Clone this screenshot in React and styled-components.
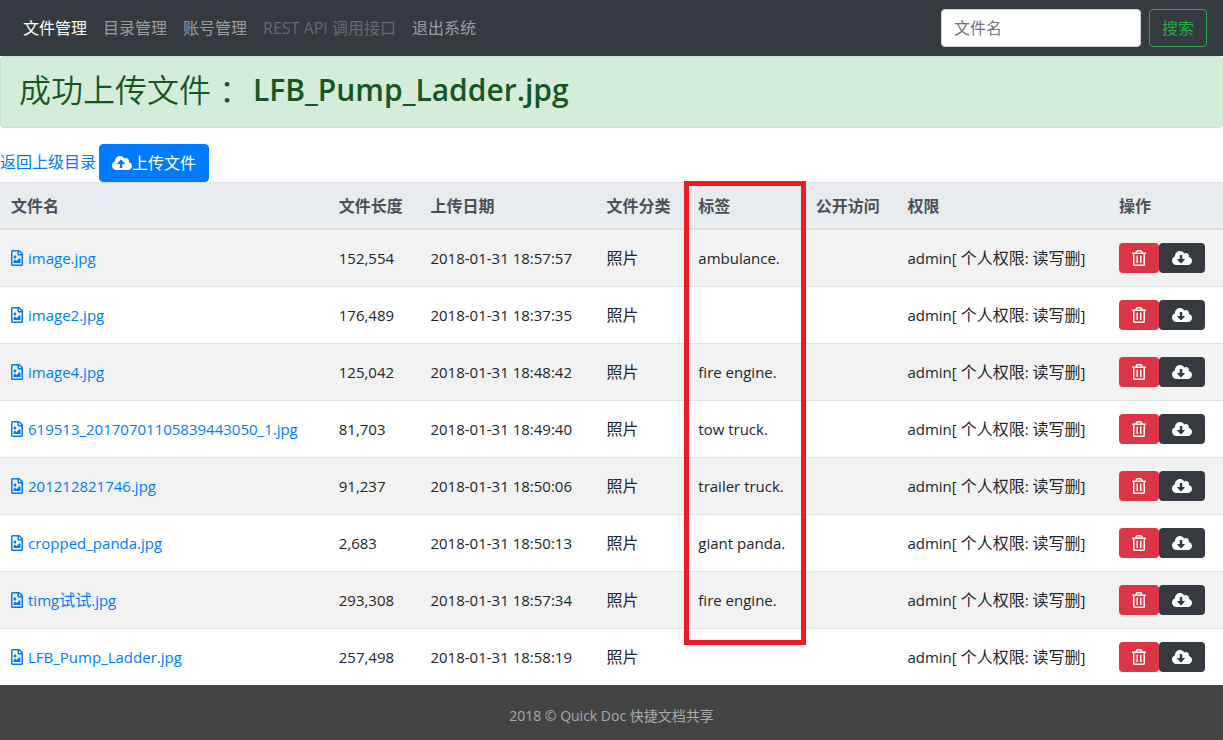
import React from "react";
import styled, { createGlobalStyle } from "styled-components";
import {
  FaCloudDownloadAlt,
  FaCloudUploadAlt,
  FaRegFileImage,
  FaRegTrashAlt,
} from "react-icons/fa";

const GlobalStyle = createGlobalStyle`
  *, *::before, *::after { box-sizing: border-box; }
  body {
    margin: 0;
    background: #fff;
    color: #212529;
    font-family: "Open Sans", "Noto Sans CJK SC", sans-serif;
    font-size: 16px;
    line-height: 24px;
  }
  button, input { font: inherit; }
  a { color: #007bff; text-decoration: none; }
`;

const Latin = styled.span`
  font-size: 15px;
`;

const Navbar = styled.nav`
  display: flex;
  align-items: center;
  justify-content: space-between;
  padding: 9px 16px 9px 15px;
  background: #343a40;
`;

const NavList = styled.ul`
  display: flex;
  margin: 0;
  padding: 0;
  list-style: none;
`;

const navColors = {
  active: "#fff",
  disabled: "rgba(255, 255, 255, 0.25)",
  normal: "rgba(255, 255, 255, 0.5)",
};

const NavLink = styled.a`
  display: block;
  padding: 7px 8px;
  white-space: nowrap;
  color: ${({ $state }) => navColors[$state || "normal"]};
`;

const SearchForm = styled.form`
  display: flex;
  gap: 8px;
`;

const SearchInput = styled.input`
  width: 200px;
  height: 38px;
  padding: 6px 12px;
  border: 1px solid #ced4da;
  border-radius: 4px;
  background: #fff;
  color: #495057;
  &::placeholder { color: #6c757d; opacity: 1; }
`;

const SearchButton = styled.button`
  height: 38px;
  padding: 0 12px;
  border: 1px solid #28a745;
  border-radius: 4px;
  background: transparent;
  color: #28a745;
  cursor: pointer;
`;

const Alert = styled.div`
  margin-bottom: 16px;
  padding: 12px 18px;
  border: 1px solid #c3e6cb;
  border-radius: 4px;
  background: #d4edda;
  color: #155724;
`;

const AlertTitle = styled.h2`
  display: flex;
  align-items: center;
  height: 46px;
  margin: 0;
  padding-bottom: 4px;
  font-size: 32px;
  font-weight: 350;
  line-height: 40px;

  strong {
    margin-left: 10px;
    font-size: 30px;
    font-weight: 600;
  }
`;

const Colon = styled.span`
  font-family: "Noto Sans CJK TC", sans-serif;
`;

const Toolbar = styled.div`
  display: flex;
  align-items: center;
  gap: 3px;
`;

const BackLink = styled.a`
  padding-bottom: 2px;
`;

const UploadButton = styled.button`
  display: flex;
  align-items: center;
  height: 38px;
  padding: 0 12px;
  border: 1px solid #007bff;
  border-radius: 4px;
  background: #007bff;
  color: #fff;
  cursor: pointer;
`;

const CloudUp = styled(FaCloudUploadAlt)`
  width: 20px;
  height: 16px;
`;

const TableArea = styled.div`
  position: relative;
`;

const TagHighlight = styled.div`
  position: absolute;
  top: -1px;
  bottom: 40px;
  left: 55.9%;
  width: 10%;
  border: 5px solid #ed1c24;
  pointer-events: none;
`;

const Table = styled.table`
  width: 100%;
  table-layout: fixed;
  border-collapse: separate;
  border-spacing: 0;
`;

const Col = styled.col`
  width: ${({ $width }) => $width};
`;

const HeadCell = styled.th`
  height: 48px;
  padding: 0 11px;
  border-top: 1px solid #dee2e6;
  border-bottom: 2px solid #dee2e6;
  background: #e9ecef;
  color: #495057;
  font-weight: 600;
  text-align: left;
  white-space: nowrap;
`;

const Cell = styled.td`
  height: 57px;
  padding: 0 11px;
  border-top: 1px solid #dee2e6;
  white-space: nowrap;
`;

const Row = styled.tr`
  &:nth-child(odd) { background: #f2f2f2; }
  &:first-child ${Cell} { height: 56px; border-top: 0; }
`;

const FileLink = styled.a`
  display: flex;
  align-items: center;
  gap: 5px;
`;

const FileIcon = styled(FaRegFileImage)`
  width: 12px;
  height: 16px;
`;

const Actions = styled.div`
  display: flex;
`;

const ActionButton = styled.button`
  display: flex;
  align-items: center;
  height: 30px;
  padding: 0 13px;
  border: 0;
  border-radius: 4px;
  background: ${({ $danger }) => ($danger ? "#dc3545" : "#343a40")};
  color: #fff;
  cursor: pointer;
`;

const TrashIcon = styled(FaRegTrashAlt)`
  width: 14px;
  height: 16px;
`;

const CloudDown = styled(FaCloudDownloadAlt)`
  width: 20px;
  height: 16px;
`;

const Footer = styled.footer`
  padding: 20px 16px 13px;
  background: #444;
  color: #aaa;
  font-size: 14px;
  line-height: 22px;
  text-align: center;
`;

const columns = [
  ["文件名", "26.8%"],
  ["文件长度", "7.5%"],
  ["上传日期", "14.4%"],
  ["文件分类", "7.5%"],
  ["标签", "9.6%"],
  ["公开访问", "7.5%"],
  ["权限", "17.3%"],
  ["操作", "9.4%"],
];

const files = [
  { name: "image.jpg", size: "152,554", date: "2018-01-31 18:57:57", tag: "ambulance." },
  { name: "image2.jpg", size: "176,489", date: "2018-01-31 18:37:35", tag: "" },
  { name: "image4.jpg", size: "125,042", date: "2018-01-31 18:48:42", tag: "fire engine." },
  { name: "619513_20170701105839443050_1.jpg", size: "81,703", date: "2018-01-31 18:49:40", tag: "tow truck." },
  { name: "201212821746.jpg", size: "91,237", date: "2018-01-31 18:50:06", tag: "trailer truck." },
  { name: "cropped_panda.jpg", size: "2,683", date: "2018-01-31 18:50:13", tag: "giant panda." },
  { name: "timg试试.jpg", size: "293,308", date: "2018-01-31 18:57:34", tag: "fire engine." },
  { name: "LFB_Pump_Ladder.jpg", size: "257,498", date: "2018-01-31 18:58:19", tag: "" },
];

// Latin runs are set one pixel smaller than the Chinese around them.
function MixedText({ text }) {
  return (
    <span>
      {text
        .split(/([\u4e00-\u9fff]+)/)
        .filter(Boolean)
        .map((part, i) =>
          /[\u4e00-\u9fff]/.test(part) ? part : <Latin key={i}>{part}</Latin>
        )}
    </span>
  );
}

function FileRow({ file }) {
  return (
    <Row>
      <Cell>
        <FileLink href="#">
          <FileIcon aria-hidden="true" />
          <MixedText text={file.name} />
        </FileLink>
      </Cell>
      <Cell><Latin>{file.size}</Latin></Cell>
      <Cell><Latin>{file.date}</Latin></Cell>
      <Cell>照片</Cell>
      <Cell><Latin>{file.tag}</Latin></Cell>
      <Cell />
      <Cell><MixedText text="admin[ 个人权限: 读写删]" /></Cell>
      <Cell>
        <Actions>
          <ActionButton type="button" $danger aria-label="删除">
            <TrashIcon />
          </ActionButton>
          <ActionButton type="button" aria-label="下载">
            <CloudDown />
          </ActionButton>
        </Actions>
      </Cell>
    </Row>
  );
}

export default function App() {
  return (
    <>
      <GlobalStyle />
      <Navbar>
        <NavList>
          <li><NavLink href="#" $state="active">文件管理</NavLink></li>
          <li><NavLink href="#">目录管理</NavLink></li>
          <li><NavLink href="#">账号管理</NavLink></li>
          <li>
            <NavLink href="#" $state="disabled">REST API 调用接口</NavLink>
          </li>
          <li><NavLink href="#">退出系统</NavLink></li>
        </NavList>
        <SearchForm>
          <SearchInput type="text" placeholder="文件名" aria-label="文件名" />
          <SearchButton type="button">搜索</SearchButton>
        </SearchForm>
      </Navbar>
      <main>
        <Alert role="alert">
          <AlertTitle>
            成功上传文件<Colon>：</Colon>
            <strong>LFB_Pump_Ladder.jpg</strong>
          </AlertTitle>
        </Alert>
        <Toolbar>
          <BackLink href="#">返回上级目录</BackLink>
          <UploadButton type="button">
            <CloudUp aria-hidden="true" />上传文件
          </UploadButton>
        </Toolbar>
        <TableArea>
          <Table>
            <colgroup>
              {columns.map(([label, width]) => <Col key={label} $width={width} />)}
            </colgroup>
            <thead>
              <tr>
                {columns.map(([label]) => (
                  <HeadCell key={label} scope="col">{label}</HeadCell>
                ))}
              </tr>
            </thead>
            <tbody>
              {files.map((file) => <FileRow key={file.name} file={file} />)}
            </tbody>
          </Table>
          <TagHighlight />
        </TableArea>
      </main>
      <Footer>2018 © Quick Doc 快捷文档共享</Footer>
    </>
  );
}
